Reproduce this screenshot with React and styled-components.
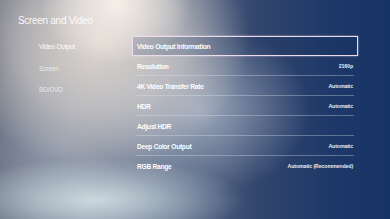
import styled, { createGlobalStyle } from "styled-components";

const GlobalStyle = createGlobalStyle`
  html, body {
    margin: 0;
    padding: 0;
    width: 390px;
    height: 219px;
    overflow: hidden;
  }
  body {
    font-family: "Liberation Sans", Arial, sans-serif;
    color: #fff;
  }
`;

const Screen = styled.div`
  width: 390px;
  height: 219px;
  box-sizing: border-box;
  padding: 14px 0 0 18px;
  background:
    radial-gradient(ellipse 75px 60px at 116px 4px, rgba(248, 242, 234, 0.95), rgba(248, 242, 234, 0) 100%),
    radial-gradient(ellipse 150px 125px at 100px 42px, rgba(228, 220, 212, 0.95) 0%, rgba(222, 215, 209, 0.6) 55%, rgba(220, 214, 208, 0) 100%),
    radial-gradient(ellipse 110px 85px at 200px 110px, rgba(176, 186, 202, 0.78), rgba(176, 186, 202, 0) 100%),
    radial-gradient(ellipse 150px 42px at 95px 200px, rgba(206, 220, 226, 0.95), rgba(206, 220, 226, 0) 100%),
    radial-gradient(ellipse 120px 110px at 60px 150px, rgba(152, 162, 178, 0.8), rgba(152, 162, 178, 0) 100%),
    linear-gradient(90deg, #565e70 0%, #7a8294 22%, #5f6e8a 45%, #34476e 65%, #1d3868 85%, #173466 100%);
`;

const Title = styled.h1`
  margin: 0;
  font-size: 10px;
  font-weight: 400;
  line-height: 13px;
  letter-spacing: -0.3px;
  color: rgba(255, 255, 255, 0.95);
`;

const Body = styled.div`
  display: flex;
  margin-top: 9px;
`;

const Nav = styled.nav`
  width: 114px;
  padding: 0 0 0 21px;
  box-sizing: border-box;
  display: flex;
  flex-direction: column;
`;

const NavItem = styled.div`
  height: 21.5px;
  line-height: 21px;
  font-size: 6.5px;
  letter-spacing: -0.15px;
  color: ${(p) => (p.$active ? "#fff" : "rgba(255, 255, 255, 0.7)")};
`;

const List = styled.div`
  width: 226px;
  display: flex;
  flex-direction: column;
`;

const Row = styled.div`
  height: 20px;
  box-sizing: border-box;
  display: flex;
  align-items: center;
  justify-content: space-between;
  padding: 0 4px;
  border: 1.5px solid ${(p) => (p.$focused ? "#eadcea" : "transparent")};
  box-shadow: ${(p) => (p.$focused ? "0 0 2px rgba(255, 220, 240, 0.6)" : "none")};
  background: ${(p) => (p.$focused ? "rgba(20, 45, 90, 0.2)" : "transparent")};
  position: relative;

  &::after {
    content: "";
    display: ${(p) => (p.$divider ? "block" : "none")};
    position: absolute;
    left: 3px;
    right: 3px;
    bottom: -1px;
    height: 1px;
    background: rgba(220, 226, 236, 0.35);
  }
`;

const Label = styled.span`
  font-size: 6.6px;
  font-weight: 700;
  letter-spacing: -0.25px;
  color: #fff;
`;

const Value = styled.span`
  font-size: 5.3px;
  font-weight: 700;
  letter-spacing: -0.15px;
  color: rgba(255, 255, 255, 0.92);
`;

const rows = [
  { label: "Video Output Information", value: "" },
  { label: "Resolution", value: "2160p" },
  { label: "4K Video Transfer Rate", value: "Automatic" },
  { label: "HDR", value: "Automatic" },
  { label: "Adjust HDR", value: "" },
  { label: "Deep Color Output", value: "Automatic" },
  { label: "RGB Range", value: "Automatic (Recommended)" },
];

export default function App() {
  return (
    <>
      <GlobalStyle />
      <Screen>
        <Title>Screen and Video</Title>
        <Body>
          <Nav>
            <NavItem $active>Video Output</NavItem>
            <NavItem>Screen</NavItem>
            <NavItem>BD/DVD</NavItem>
          </Nav>
          <List>
            {rows.map((r, i) => (
              <Row
                key={r.label}
                $focused={i === 0}
                $divider={i > 0 && i < rows.length - 1}
              >
                <Label>{r.label}</Label>
                {r.value && <Value>{r.value}</Value>}
              </Row>
            ))}
          </List>
        </Body>
      </Screen>
    </>
  );
}
